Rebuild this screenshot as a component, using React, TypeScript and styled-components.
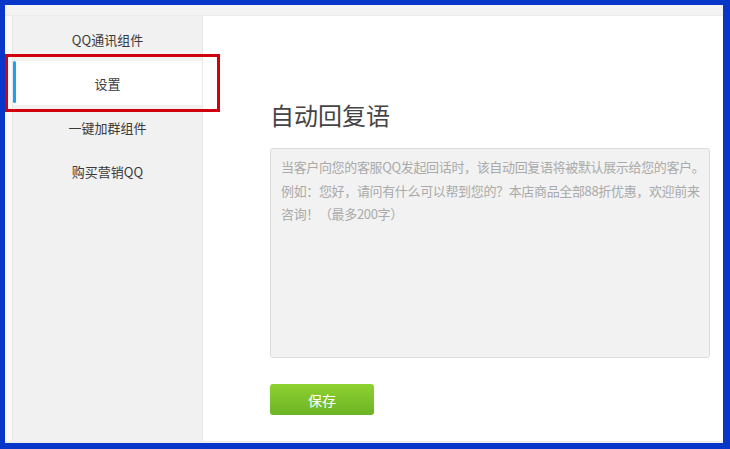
import React, { useState } from "react";
import styled, { createGlobalStyle } from "styled-components";

const GlobalStyle = createGlobalStyle`
  html, body {
    margin: 0;
    padding: 0;
    background: #ffffff;
  }
  body {
    font-family: "Noto Sans CJK SC", "Liberation Sans", sans-serif;
  }
  * {
    box-sizing: border-box;
  }
`;

const Frame = styled.div`
  width: 730px;
  height: 449px;
  display: flex;
  flex-direction: column;
  border-style: solid;
  border-color: #0836c9;
  border-width: 5px 7px 6px 5px;
  background: #ffffff;
  overflow: hidden;
`;

const TopBand = styled.div`
  height: 11px;
  flex-shrink: 0;
  background: #f3f3f3;
  border-bottom: 1px solid #ececec;
`;

const Body = styled.div`
  flex: 1;
  display: flex;
  min-height: 0;
  padding-left: 7px;
  background: #fafafa;
  border-bottom: 2px solid #eeeeee;
`;

const Sidebar = styled.nav`
  width: 191px;
  flex-shrink: 0;
  display: flex;
  flex-direction: column;
  padding-top: 1px;
  background: #f1f1f1;
  border-left: 1px solid #e6e6e6;
  border-right: 1px solid #e9e9e9;
`;

const NavItem = styled.div<{ $active?: boolean }>`
  position: relative;
  height: 44px;
  display: flex;
  align-items: center;
  justify-content: center;
  font-size: 13px;
  color: #3a3a3a;
  cursor: pointer;
  background: ${(p) => (p.$active ? "#ffffff" : "transparent")};

  &::before {
    content: "";
    display: ${(p) => (p.$active ? "block" : "none")};
    position: absolute;
    left: 0;
    top: 0;
    bottom: 2px;
    width: 3px;
    border-radius: 2px;
    background: #1aa3f5;
  }

  &::after {
    content: "";
    display: ${(p) => (p.$active ? "block" : "none")};
    position: absolute;
    left: -8px;
    right: -18px;
    top: -7px;
    bottom: -7px;
    border: 3px solid #d0000f;
    pointer-events: none;
  }
`;

const Main = styled.main`
  flex: 1;
  background: #ffffff;
  padding: 81px 10px 0 67px;
  display: flex;
  flex-direction: column;
  align-items: flex-start;
`;

const Title = styled.h1`
  margin: 0;
  font-size: 24px;
  font-weight: normal;
  line-height: 36px;
  color: #444444;
`;

const ReplyBox = styled.textarea`
  margin-top: 15px;
  width: 440px;
  height: 210px;
  padding: 6px 0 6px 10px;
  resize: none;
  border: 1px solid #dddddd;
  border-radius: 3px;
  background: #f2f2f2;
  font-family: "Noto Sans CJK SC", "Liberation Sans", sans-serif;
  font-size: 13px;
  letter-spacing: -0.35px;
  line-height: 23.5px;
  color: #555555;
  outline: none;

  &::placeholder {
    color: #aaaaaa;
  }
`;

const SaveButton = styled.button`
  margin-top: 26px;
  width: 104px;
  height: 31px;
  border: none;
  border-radius: 3px;
  background: linear-gradient(#8ed131, #6cb424);
  color: #ffffff;
  font-family: "Noto Sans CJK SC", "Liberation Sans", sans-serif;
  font-size: 14px;
  cursor: pointer;
`;

const navItems = ["QQ通讯组件", "设置", "一键加群组件", "购买营销QQ"];

const hint = [
  "当客户向您的客服QQ发起回话时，该自动回复语将被默认展示给您的客户。",
  "例如：您好，请问有什么可以帮到您的？本店商品全部88折优惠，欢迎前来",
  "咨询！（最多200字）",
].join("\n");

export default function App() {
  const [active, setActive] = useState(1);
  const [reply, setReply] = useState("");

  return (
    <>
      <GlobalStyle />
      <Frame>
        <TopBand />
        <Body>
          <Sidebar>
            {navItems.map((label, i) => (
              <NavItem key={label} $active={i === active} onClick={() => setActive(i)}>
                {label}
              </NavItem>
            ))}
          </Sidebar>
          <Main>
            <Title>自动回复语</Title>
            <ReplyBox value={reply} onChange={(e) => setReply(e.target.value)} placeholder={hint} />
            <SaveButton>保存</SaveButton>
          </Main>
        </Body>
      </Frame>
    </>
  );
}
